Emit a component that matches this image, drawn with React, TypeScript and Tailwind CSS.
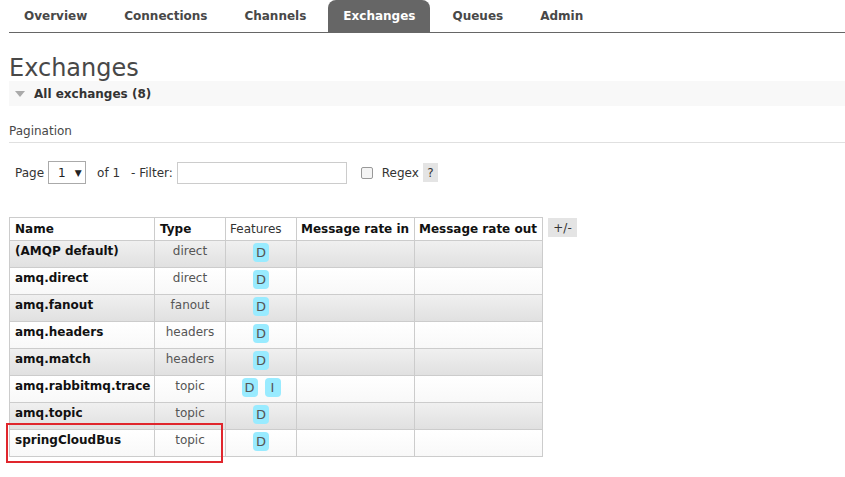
import React from "react";

const tabs = ["Overview", "Connections", "Channels", "Exchanges", "Queues", "Admin"];

const rows = [
  { name: "(AMQP default)", type: "direct", features: ["D"] },
  { name: "amq.direct", type: "direct", features: ["D"] },
  { name: "amq.fanout", type: "fanout", features: ["D"] },
  { name: "amq.headers", type: "headers", features: ["D"] },
  { name: "amq.match", type: "headers", features: ["D"] },
  { name: "amq.rabbitmq.trace", type: "topic", features: ["D", "I"] },
  { name: "amq.topic", type: "topic", features: ["D"] },
  { name: "springCloudBus", type: "topic", features: ["D"] },
];

const App = () => {
  return (
    <div className="relative min-h-[477px] bg-white pl-[9px] font-['DejaVu_Sans',Verdana,sans-serif] text-[12px] leading-[14px] text-[#484848]">
      {/* top menu */}
      <ul className="flex h-[33px] border-b border-[#666]">
        {tabs.map((t) => (
          <li
            key={t}
            className={
              t === "Exchanges"
                ? "mr-[7px] flex h-[32px] items-center rounded-t-[8px] bg-[#666] px-[15px] font-bold text-white"
                : "mr-[7px] flex h-[32px] items-center px-[15px] font-bold text-[#484848]"
            }
          >
            {t}
          </li>
        ))}
      </ul>

      <h1 className="mt-[22px] text-[24px] leading-[26px] text-[#484848]">Exchanges</h1>

      <div className="flex h-[25px] items-center bg-[#f8f8f8] pl-[6px]">
        <span className="mr-[9px] h-0 w-0 border-x-[5px] border-t-[6px] border-x-transparent border-t-[#aaa]" />
        <span className="font-bold text-[#333]">All exchanges (8)</span>
      </div>

      <div className="mt-[18px] border-b border-[#e0e0e0] pb-[4px]">Pagination</div>

      <div className="mt-[18px] flex items-center pl-[6px] text-[#333]">
        <span>Page</span>
        <div className="ml-[4px] flex h-[23px] w-[38px] items-center border border-[#aaa] bg-white pl-[9px] text-[#222]">
          <span>1</span>
          <span className="ml-[9px] text-[9px]">▼</span>
        </div>
        <span className="ml-[11px]">of 1</span>
        <span className="ml-[11px]">- Filter:</span>
        <div className="ml-[4px] h-[22px] w-[170px] border border-[#ccc] bg-white" />
        <span className="ml-[14px] h-[12px] w-[12px] rounded-[2px] border border-[#999] bg-[#f4f4f4]" />
        <span className="ml-[9px]">Regex</span>
        <span className="ml-[4px] flex h-[19px] w-[15px] items-center justify-center bg-[#e4e4e4] text-[#333]">?</span>
      </div>

      <div className="mt-[33px] flex items-start">
        <table className="w-[533px] table-fixed border-collapse whitespace-nowrap">
          <colgroup>
            <col className="w-[145px]" />
            <col className="w-[71px]" />
            <col className="w-[71px]" />
            <col className="w-[118px]" />
            <col className="w-[128px]" />
          </colgroup>
          <thead>
            <tr className="h-[23px] bg-white">
              <th className="border border-[#ccc] px-[5px] text-left font-bold text-[#111]">Name</th>
              <th className="border border-[#ccc] px-[5px] text-left font-bold text-[#111]">Type</th>
              <th className="border border-[#ccc] px-[4px] text-left font-normal text-[#333]">Features</th>
              <th className="border border-[#ccc] px-[4px] text-left font-bold text-[#111]">Message rate in</th>
              <th className="border border-[#ccc] px-[4px] text-left font-bold text-[#111]">Message rate out</th>
            </tr>
          </thead>
          <tbody>
            {rows.map((r, i) => (
              <tr
                key={r.name}
                className={
                  i % 2 === 0
                    ? "h-[27px] bg-gradient-to-b from-[#f0f0f0] to-[#e0e0e0]"
                    : "h-[27px] bg-gradient-to-b from-[#ffffff] to-[#f8f8f8]"
                }
              >
                <td className="border border-[#ccc] px-[5px] pt-[3px] align-top font-bold text-[#111]">{r.name}</td>
                <td className="border border-[#ccc] px-[4px] pt-[3px] text-center align-top text-[#555]">{r.type}</td>
                <td className="border border-[#ccc] px-[4px] pt-[2px] align-top">
                  <div className="flex justify-center gap-[7px]">
                    {r.features.map((f) => (
                      <span
                        key={f}
                        className="flex h-[19px] w-[16px] items-center justify-center rounded-[4px] bg-[#99ebff] text-[13px] text-[#555]"
                      >
                        {f}
                      </span>
                    ))}
                  </div>
                </td>
                <td className="border border-[#ccc]" />
                <td className="border border-[#ccc]" />
              </tr>
            ))}
          </tbody>
        </table>
        <span className="ml-[5px] mt-px flex h-[19px] w-[29px] items-center justify-center bg-[#e4e4e4] text-[#333]">+/-</span>
      </div>

      {/* annotation */}
      <div className="absolute left-[6px] top-[423px] h-[40px] w-[217px] border-2 border-[#e0262d]" />
    </div>
  );
};

export default App;
